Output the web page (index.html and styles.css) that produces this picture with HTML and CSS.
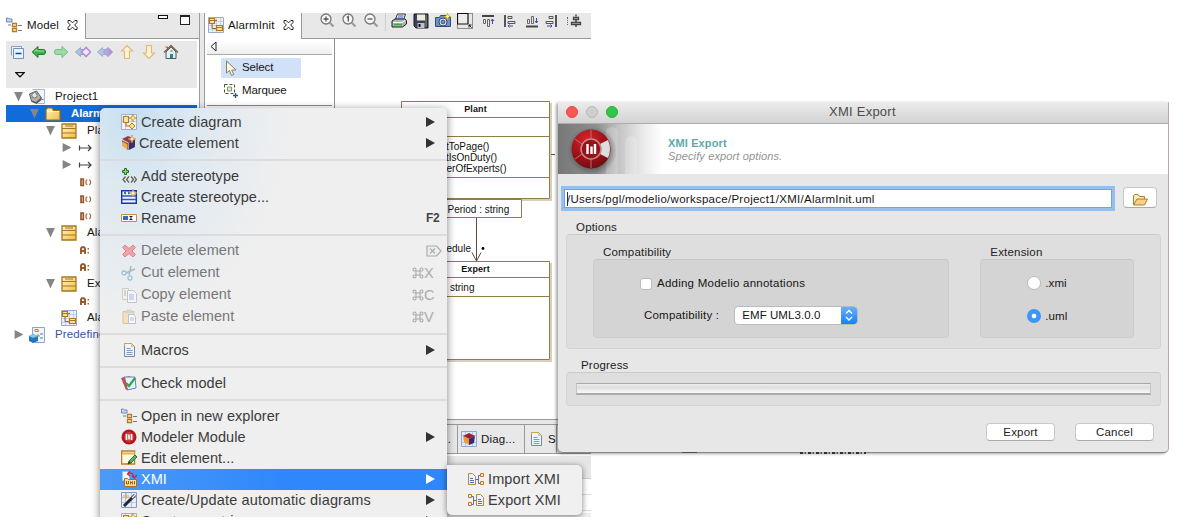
FILE: index.html
```html
<!DOCTYPE html>
<html lang="en">
<head>
<meta charset="utf-8">
<title>Modelio - XMI Export</title>
<link rel="stylesheet" href="styles.css">
</head>
<body>
<svg class="sprite" aria-hidden="true">
  <defs>
    <linearGradient id="gold" x1="0" y1="0" x2="1" y2="1"><stop offset="0" stop-color="#fff6cf"/><stop offset="1" stop-color="#f0bd3e"/></linearGradient>
    <linearGradient id="violet" x1="0" y1="0" x2="1" y2="0"><stop offset="0" stop-color="#aebfe4"/><stop offset="1" stop-color="#b28ad2"/></linearGradient>
    <radialGradient id="redball" cx=".4" cy=".25" r=".8"><stop offset="0" stop-color="#d3232c"/><stop offset=".55" stop-color="#a11319"/><stop offset="1" stop-color="#6b0d10"/></radialGradient>
  </defs>
  <symbol id="explorer" viewBox="0 0 16 16"><path d="M.5 1h2l1 1H6v3H.5z" fill="#c8d6f3" stroke="#6c86be"/><path d="M2 8h3M12 8.500h4M12 13.500h4" stroke="#777"/><path d="M6.500 6.500h4v3h-4zM6.500 11.500h4v3h-4z" fill="#fff3c8" stroke="#b87a22" stroke-width="1.300"/></symbol>
  <symbol id="diagram" viewBox="0 0 16 16"><path d="M.5.500h15v15H.500z" fill="#e9effb" stroke="#9aaacd"/><path d="M4.500 1v14M8.500 1v14M12.500 1v14M1 4.500h14M1 8.500h14M1 12.500h14" stroke="#bdcbea" stroke-width=".8"/><path d="M4 7v4.500h4M6 3.500h3" stroke="#98661c" fill="none"/><path d="M1.500 1.500h5v5h-5zM8.500 8.500h6v5h-6z" fill="#ffe69a" stroke="#ad761d" stroke-width="1.200"/><path d="M1.500 3.500h5M8.500 10.500h6" stroke="#ad761d"/></symbol>
  <symbol id="close" viewBox="0 0 10 10"><path d="M.500.500h2.200L5 2.900 7.300.500h2.200v2L7.200 5l2.300 2.500v2H7.300L5 7.100 2.700 9.500H.500v-2L2.800 5 .500 2.500z" fill="#fff" stroke="#222"/></symbol>
  <symbol id="collapse" viewBox="0 0 16 16"><path d="M2.500 11.500v-9h10v2" fill="#eef5fc" stroke="#7da2c8"/><path d="M4.500 4.500h10v10h-10z" fill="#eaf4ff" stroke="#6c91bd"/><path d="M6.500 9.500h6" stroke="#174a91" stroke-width="1.500"/></symbol>
  <symbol id="left" viewBox="0 0 16 16"><path d="M1.200 8 7 2.500v3h5.500q2 0 2 2.500t-2 2.500H7v3z" fill="#42ae4c" stroke="#1e7b2b"/><path d="m3 8 3-2.500V7h7" stroke="#9ee09d" fill="none"/></symbol>
  <symbol id="right" viewBox="0 0 16 16"><path d="M14.800 8 9 2.500v3H3.500q-2 0-2 2.500t2 2.500H9v3z" fill="#9ddaa5" stroke="#75bb82"/></symbol>
  <symbol id="diamonds" viewBox="0 0 16 16"><path d="m.500 8 5-4.500v2h3v5h-3v2z" fill="#a9c2df" stroke="#8ca7ca"/><path d="m6.500 8 4.500-4.500L15.500 8 11 12.500z" fill="#f3e6fa" stroke="#b58dd4" stroke-width="1.600"/></symbol>
  <symbol id="diamonds2" viewBox="0 0 16 16"><path d="m.500 8 5-4.500v2h3v5h-3v2z" fill="#b3c6e1" stroke="#9eacd0"/><path d="m6.500 8 4.500-4.500L15.500 8 11 12.500z" fill="url(#violet)" stroke="#b08ace"/></symbol>
  <symbol id="up" viewBox="0 0 16 16"><path d="M8 1.500 13.500 7H10.500v7.500h-5V7H2.500z" fill="#fff1d5" stroke="#e1ba7b" stroke-width="1.200"/></symbol>
  <symbol id="down" viewBox="0 0 16 16"><path d="M8 14.500 13.500 9H10.500V1.500h-5V9H2.500z" fill="#fff1d5" stroke="#e1ba7b" stroke-width="1.200"/></symbol>
  <symbol id="home" viewBox="0 0 16 16"><path d="M3 8v6.500h10V8L8 3z" fill="#e5eef8" stroke="#405b75"/><path d="M2.500 3h2v4" stroke="#975b35" fill="none"/><path d="m1 8.500 7-7 7 7" stroke="#846345" stroke-width="1.500" fill="none"/><path d="M7 10h3v4H7z" fill="#338b5a"/><path d="M7.500 6h2v2h-2z" fill="#80bd59"/></symbol>
  <symbol id="project" viewBox="0 0 16 16"><path d="M3.500.500h12v14h-7" fill="#f1f5fd" stroke="#a3b6da"/><path d="m.500 5 7-3 5 7-5 5-5-2z" fill="#b4b3ae" stroke="#605e59"/><circle cx="5.500" cy="6.300" r="2.700" fill="#e5e5df" stroke="#77746d"/><path d="m2.500 11.500 4.500 1.500 5.500-5v3l-5 4-5-2z" fill="#5c5b57"/><path d="M12.500 10.500h2" stroke="#667cab"/></symbol>
  <symbol id="package" viewBox="0 0 16 16"><path d="M1 14V3.500L2.500 2H7l1.500 2.500H15V14z" fill="url(#gold)" stroke="#a06b14" stroke-width="1.200"/><path d="M2 5.500h12" stroke="#fff9df"/></symbol>
  <symbol id="class" viewBox="0 0 16 16"><path d="M1 1h14v14H1z" fill="url(#gold)" stroke="#a7771e" stroke-width="1.300"/><path d="M1 5.500h14M1 10h14" stroke="#a7771e" stroke-width="1.200"/><path d="M4 3h8" stroke="#a7771e"/></symbol>
  <symbol id="assoc" viewBox="0 0 16 16"><path d="M2.500 5.500v5M2.500 8H14M11 5l3 3-3 3" stroke="#444" fill="none" stroke-width="1.200"/></symbol>
  <symbol id="operation" viewBox="0 0 16 16"><path d="M4 5h2.300v6.500H4z" fill="none" stroke="#96572b" stroke-width="1.700"/><path d="M10.200 5.500 9 7v2.500l1.200 1.500M12.300 5.500 13.500 7v2.500L12.300 11" fill="none" stroke="#a4683d" stroke-width="1.200"/></symbol>
  <symbol id="attribute" viewBox="0 0 16 16"><path d="M4 12V6.300L5 5.300h2l1 1V12M4 9h4" fill="none" stroke="#96572b" stroke-width="1.900"/><path d="M10.500 6.800H12M10.500 10.800H12" stroke="#a4683d" stroke-width="1.500"/></symbol>
  <symbol id="predefined" viewBox="0 0 16 16"><path d="M3.500.500h12v15h-12z" fill="#f0f4fd" stroke="#8ba4d2"/><path d="M7 4h3M11 7h3M11 11h3" stroke="#5775ad"/><path d="M6 2.500h3v2H6zM8 8h2v2" fill="#fff" stroke="#c18331"/><path d="m0 9 4-2 5 2v5l-5 2-4-2z" fill="#2377be"/><path d="m0 9 4-2 5 2-5 2z" fill="#83c9f2"/></symbol>
  <symbol id="zoomin" viewBox="0 0 16 16"><circle cx="7" cy="6" r="5" fill="#f5f5f5" stroke="#777" stroke-width="1.300"/><path d="m10.500 9.500 4 4" stroke="#999" stroke-width="2.200"/><path d="M4.500 6h5M7 3.500v5" stroke="#555" stroke-width="1.300"/></symbol>
  <symbol id="zoomone" viewBox="0 0 16 16"><circle cx="7" cy="6" r="5" fill="#f5f5f5" stroke="#777" stroke-width="1.300"/><path d="m10.500 9.500 4 4" stroke="#999" stroke-width="2.200"/><path d="M5.800 4.500 7.300 3.500v5" stroke="#555" stroke-width="1.300" fill="none"/></symbol>
  <symbol id="zoomout" viewBox="0 0 16 16"><circle cx="7" cy="6" r="5" fill="#f5f5f5" stroke="#777" stroke-width="1.300"/><path d="m10.500 9.500 4 4" stroke="#999" stroke-width="2.200"/><path d="M4.500 6h5" stroke="#555" stroke-width="1.300"/></symbol>
  <symbol id="printer" viewBox="0 0 16 16"><path d="m4.500 6 2-5h8l-2 6z" fill="#edf3ff" stroke="#333"/><path d="M7 3h5.500M6.500 5h5.500" stroke="#3c58de"/><path d="m1 8 3-2h10l1.500 1.500V11l-4 3H1z" fill="#b3b3b3" stroke="#222"/><path d="M2 9.500h9l3-2" stroke="#fff" fill="none"/><path d="M3 11.500h8" stroke="#2bb637" stroke-width="1.500"/></symbol>
  <symbol id="floppy" viewBox="0 0 16 16"><path d="M1 1h14v14H3l-2-2z" fill="#39415b" stroke="#191d2d"/><path d="M4 1.500h8v6H4z" fill="#ededde"/><path d="M4.500 10h7v5h-7z" fill="#bfc3ca"/><path d="M5.500 11h2v3h-2z" fill="#111"/><path d="M13 2v12" stroke="#98945d"/></symbol>
  <symbol id="camera" viewBox="0 0 16 16"><path d="M.500 4.500h4l1-2h5l1 2h4v9h-15z" fill="#738fc3" stroke="#344b7f"/><circle cx="8" cy="9" r="4" fill="#eef3fa" stroke="#304879"/><circle cx="8" cy="9" r="2" fill="#7894c4" stroke="#39517d"/><path d="M12.500 0v7M9 3.500h7M10.500 1.500l4 4M14.500 1.500l-4 4" stroke="#e4ae21"/><path d="M12.500 2v3M11 3.500h3" stroke="#fff36f"/></symbol>
  <symbol id="area" viewBox="0 0 16 16"><path d="M.500.500h15v15H.500z" fill="none" stroke="#333" stroke-dasharray="1 1"/><path d="M.500.500h10.500v10.500H.500z" fill="#ededed" stroke="#111" stroke-width="1.200"/><path d="m12 12 2.500 2.500M12 14.500V12h2.500" stroke="#111" fill="none"/></symbol>
  <symbol id="aligntop" viewBox="0 0 16 16"><path d="M2 3h12" stroke="#444" stroke-width="2"/><path d="M3.500 6.500h2v4h-2zM7.500 6.500h2v7h-2z" fill="none" stroke="#666"/><path d="M12.500 11V6m-1.500 2 1.500-2L14 8" stroke="#4949a8" fill="none"/></symbol>
  <symbol id="alignleft" viewBox="0 0 16 16"><path d="M3 2v12" stroke="#555" stroke-width="2"/><path d="M6 3.500h4v2H6zM6 8.500h7v2H6z" fill="none" stroke="#555"/><path d="M11 13H6m1.500-1.500L6 13l1.500 1.500" stroke="#4949a8" fill="none"/></symbol>
  <symbol id="alignbottom" viewBox="0 0 16 16"><path d="M2 13.500h12" stroke="#444" stroke-width="2"/><path d="M3.500 6.500h2v4h-2zM7.500 3.500h2v7h-2z" fill="none" stroke="#666"/><path d="M12.500 5v5m-1.500-2 1.500 2L14 8" stroke="#4949a8" fill="none"/></symbol>
  <symbol id="alignright" viewBox="0 0 16 16"><path d="M13 2v12" stroke="#555" stroke-width="2"/><path d="M6 3.500h4v2H6zM3 8.500h7v2H3z" fill="none" stroke="#555"/><path d="M4 13h5m-1.500-1.500L9 13l-1.500 1.500" stroke="#4949a8" fill="none"/></symbol>
  <symbol id="aligncenter" viewBox="0 0 16 16"><path d="M8 1.500v2M8 7v2M8 12v2" stroke="#444" stroke-width="1.500"/><path d="M5.500 4.500h5v2h-5zM3.500 9.500h9v2h-9z" fill="none" stroke="#444" stroke-width="1.300"/></symbol>
  <symbol id="pointer" viewBox="0 0 16 16"><path d="M3.500 1v12l3-2.500 2 5 2.200-1-2-4.500H13z" fill="#fffbe6" stroke="#857f64"/></symbol>
  <symbol id="marquee" viewBox="0 0 16 16"><path d="M1.500 1.500h10v9h-10z" fill="none" stroke="#53503d" stroke-dasharray="3 2"/><path d="M4.500 4h4v4h-4z" fill="#e3ecd0" stroke="#88976d"/><path d="M12.500 10v5M10 12.500h5" stroke="#2a568a" stroke-width="1.300"/></symbol>
  <symbol id="newdiagram" viewBox="0 0 16 16"><path d="M.500.500h15v15H.500z" fill="#eef2fb" stroke="#a2afcd"/><path d="M4.500 1v14M10.500 1v14M1 7.500h14" stroke="#c5cfe8"/><path d="M2.500 2.500h5v6h-5zM5 9v3h4" fill="#ffe7a4" stroke="#b57c25" stroke-width="1.200"/><path d="M11 9l3 3-3 3-3-3z" fill="#ffdf79" stroke="#b57c25"/><path d="m12 0 1 3 3 1-3 1-1 3-1-3-3-1 3-1z" fill="#ffe58b" stroke="#b48229" stroke-width=".6"/></symbol>
  <symbol id="newelement" viewBox="0 0 16 16"><path d="m1 4 6-3 7 3-6 4z" fill="#943a55"/><path d="m1 5 6 3v7l-6-4z" fill="#ebad4e"/><path d="m8 8 6-4v8l-6 3z" fill="#40305f"/><path d="m1 6 6 3M7 8v7" stroke="#7e493a"/><path d="m11 0 1 3 3 1-3 1-1 3-1-3-3-1 3-1z" fill="#ffedab" stroke="#bc8b3d" stroke-width=".6"/></symbol>
  <symbol id="stereotype" viewBox="0 0 16 16"><path d="M3.500.500h2v2h2v2h-2v2h-2v-2h-2v-2h2z" fill="#8dd66f" stroke="#1f6f29"/><path d="M4.500 8.500 2 11.500l2.500 3M8 8.500l-2.500 3 2.500 3M10 8.500l2.500 3-2.500 3M13 8.500l2.500 3-2.500 3" fill="none" stroke="#5e5e49" stroke-width="1.200"/></symbol>
  <symbol id="newstereotype" viewBox="0 0 16 16"><path d="M.700 1.700h14.600v12.600H.700z" fill="#edf5ff" stroke="#1736a2" stroke-width="1.400"/><path d="M1 7h14M1 10.500h14" stroke="#2756c5" stroke-width="1.500"/><path d="m3 4 2-1M5 5 3 4M7 3l2 1-2 1" stroke="#273b89" fill="none"/><path d="m12 0 1 3 3 1-3 1-1 3-1-3-3-1 3-1z" fill="#fff4bd" stroke="#bc9136" stroke-width=".6"/></symbol>
  <symbol id="rename" viewBox="0 0 16 16"><path d="M.500 4.500h15v7H.500z" fill="#fff" stroke="#c28b50"/><path d="M2 6h5v4H2z" fill="#386bbc"/><path d="M8.500 6.500h3M10 6.500v3M8.500 9.500h3" stroke="#222"/></symbol>
  <symbol id="delete" viewBox="0 0 16 16"><path d="m4 2 4 3.500L12 2l2.500 2.500L11 8l3.500 3.500L12 14l-4-3.500L4 14l-2.500-2.500L5 8 1.500 4.500z" fill="#ef979b" stroke="#dd7379"/></symbol>
  <symbol id="cut" viewBox="0 0 16 16"><path d="m5 8 9-4M8 10l2-9" stroke="#a1b0bd" stroke-width="1.500"/><circle cx="3" cy="8" r="2" fill="#eef7fb" stroke="#8abbdc" stroke-width="1.300"/><circle cx="9" cy="13" r="2" fill="#eef7fb" stroke="#8abbdc" stroke-width="1.300"/></symbol>
  <symbol id="copy" viewBox="0 0 16 16"><path d="M1.500 1.500h6v11h-6z" fill="#f5f3e8" stroke="#cfc9ae"/><path d="M6.500 3.500h6l3 3v9h-9z" fill="#f5f8ff" stroke="#b9bdc4"/><path d="M8 8h5M8 10h5M8 12h5M3 4h2M3 6h2M3 8h2" stroke="#9daccd"/></symbol>
  <symbol id="paste" viewBox="0 0 16 16"><path d="M2 2.500h11v12H2z" fill="#f5ddba" stroke="#d8bb8b"/><path d="M4 2.500 6 .500h4l2 2V4H4z" fill="#c8d0d7"/><path d="M7.500 5.500h5l2 2v7h-7z" fill="#fff" stroke="#aabbd2"/><path d="M9 9h4M9 11h4" stroke="#9fb4d3"/></symbol>
  <symbol id="doc" viewBox="0 0 16 16"><path d="M3.500 1.500h7l3 3v10h-10z" fill="#eef4ff" stroke="#7889a3"/><path d="M3.500 4V1.500h7l3 3" stroke="#c3a652" fill="none"/><path d="M10 2v3h3z" fill="#e0bd62"/><path d="M5.500 6.500h4M5.500 8.500h6M5.500 10.500h6M5.500 12.500h6" stroke="#7f9ac8"/></symbol>
  <symbol id="check" viewBox="0 0 16 16"><path d="m0 3 9-2 4 11-8 3z" fill="#c9514e"/><path d="M3 2h11l1 11-9 2z" fill="#e5f2ff" stroke="#628ab5"/><path d="m1 3 3-1 3 13-2-1z" fill="#ad5864"/><path d="m5 8 3 3 6-8" fill="none" stroke="#3b9e4c" stroke-width="2.200"/></symbol>
  <symbol id="modelio" viewBox="0 0 16 16"><circle cx="8" cy="8" r="7.500" fill="#b4171d"/><circle cx="8" cy="8" r="4.900" fill="#c53e42"/><path d="M5.500 5v6M8 5.500v5M10.500 5v6" stroke="#fff" stroke-width="1.600"/></symbol>
  <symbol id="edit" viewBox="0 0 16 16"><path d="M.600 1h13v13H.600z" fill="#fff9df" stroke="#b1842b" stroke-width="1.300"/><path d="M1 3.500h13" stroke="#e0b553" stroke-width="2"/><path d="m7 14 1-3 6-6 2 2-6 6z" fill="#54b660" stroke="#356e38"/><path d="m7 14 1-3 2 2z" fill="#3e352a"/></symbol>
  <symbol id="xmi" viewBox="0 0 16 16"><path d="M1.500.500h7v9h-7z" fill="#f4f8ff" stroke="#9fbde5"/><path d="M3.500 7.500h3l1 1h8v7h-12z" fill="#ffe09a" stroke="#ad6e17"/><path d="M5.500 10v3h2v-3M9.500 13.500V10.500l1 1 1-1v3M13.500 10v3.500" stroke="#a45f1b" fill="none"/><path d="M7 3q5-3 6 4M9 0 6.500 3 9 5M11 5l2.500 2L16 4" stroke="#e21e2c" fill="none" stroke-width="1.300"/></symbol>
  <symbol id="wand" viewBox="0 0 16 16"><path d="M.500.500h15v15H.500z" fill="#e6edf9" stroke="#8497c1"/><path d="M4.500 1v14M10.500 1v14M1 5.500h14M1 10.500h14" stroke="#b6c5e3"/><path d="M3 14 14 3" stroke="#26262c" stroke-width="3"/><path d="m11 6 3-3" stroke="#fff" stroke-width="1.500"/><path d="M5 1v6M2 4h6" stroke="#daaf38" stroke-width="1.200"/></symbol>
  <symbol id="import" viewBox="0 0 16 16"><path d="M.500 2.500h4l3 3v8h-7z" fill="#edf3fc" stroke="#b28a38"/><path d="M2 7.500h3M2 9.500h4M2 11.500h4" stroke="#4e75b3"/><path d="M8 8.500h2.500M12 4.500h-1.500v8H12" stroke="#5a6f9e" fill="none"/><path d="M12.500 2.500h3v3h-3zM12.500 10.500h3v3h-3z" fill="#fff0c7" stroke="#cd7527"/></symbol>
  <symbol id="export" viewBox="0 0 16 16"><path d="M8.500 2.500h4l3 3v8h-7z" fill="#edf3fc" stroke="#b28a38"/><path d="M10 7.500h3M10 9.500h4M10 11.500h4" stroke="#4e75b3"/><path d="M4 4.500h1.500v8H4M5.500 8.500H8" stroke="#5a6f9e" fill="none"/><path d="M.500 2.500h3v3h-3zM.500 10.500h3v3h-3z" fill="#fff0c7" stroke="#cd7527"/></symbol>
  <symbol id="cube" viewBox="0 0 16 16"><path d="M.500.500h15v15H.500z" fill="#e1eaf9" stroke="#91a6d2"/><path d="M4.500 1v14M11.500 1v14M1 4.500h14M1 11.500h14" stroke="#b7c8e7"/><path d="m2 5 6-3 6 3-6 3z" fill="#992331"/><path d="m2 5 6 3v6l-5-3z" fill="#f19a34"/><path d="m8 8 6-3-1 7-5 2z" fill="#392a69"/></symbol>
  <symbol id="folder" viewBox="0 0 16 16"><path d="M1.500 13V3.500L3 2.500h3l1.500 2h5V7" fill="#ffeabb" stroke="#b37a31"/><path d="m1.500 13 3.500-6h10.500l-3 6z" fill="#f9cf83" stroke="#b37a31"/></symbol>
  <symbol id="command" viewBox="0 0 12 12"><path d="M4 4V2.500A1.500 1.500 0 1 0 2.500 4h7A1.500 1.500 0 1 0 8 2.500v7A1.500 1.500 0 1 0 9.500 8h-7A1.500 1.500 0 1 0 4 9.500z" fill="none" stroke="#aaa" stroke-width="1.100"/></symbol>
</svg>

<div class="desktop">
  <main class="ide">
    <section class="explorer">
      <div class="tabbar">
        <div class="tab"><svg class="icon"><use href="#explorer"/></svg><span>Model</span><svg class="closer"><use href="#close"/></svg></div>
        <div class="rest window-buttons"><i class="minimize"></i><i class="maximize"></i></div>
      </div>
      <div class="tools">
        <div class="tool-row"><svg class="icon"><use href="#collapse"/></svg><svg class="icon"><use href="#left"/></svg><svg class="icon"><use href="#right"/></svg><svg class="icon"><use href="#diamonds"/></svg><svg class="icon"><use href="#diamonds2"/></svg><svg class="icon"><use href="#up"/></svg><svg class="icon"><use href="#down"/></svg><svg class="icon"><use href="#home"/></svg></div>
        <svg class="view-menu" viewBox="0 0 10 6"><path d="M.800.700h8.400L5 4.800z" fill="#fff" stroke="#111" stroke-width="1.200"/></svg>
      </div>
      <div class="tree">
        <div class="node l0"><i class="open"></i><svg class="icon"><use href="#project"/></svg><span>Project1</span></div>
        <div class="node l1 selected"><i class="open"></i><svg class="icon"><use href="#package"/></svg><span>AlarmInit</span></div>
        <div class="node l2"><i class="open"></i><svg class="icon"><use href="#class"/></svg><span>Plant</span></div>
        <div class="node l3"><i class="shut"></i><svg class="icon"><use href="#assoc"/></svg></div>
        <div class="node l3"><i class="shut"></i><svg class="icon"><use href="#assoc"/></svg></div>
        <div class="node l3"><i></i><svg class="icon"><use href="#operation"/></svg></div>
        <div class="node l3"><i></i><svg class="icon"><use href="#operation"/></svg></div>
        <div class="node l3"><i></i><svg class="icon"><use href="#operation"/></svg></div>
        <div class="node l2"><i class="open"></i><svg class="icon"><use href="#class"/></svg><span>Alarm</span></div>
        <div class="node l3"><i></i><svg class="icon"><use href="#attribute"/></svg></div>
        <div class="node l3"><i></i><svg class="icon"><use href="#attribute"/></svg></div>
        <div class="node l2"><i class="open"></i><svg class="icon"><use href="#class"/></svg><span>Expert</span></div>
        <div class="node l3"><i></i><svg class="icon"><use href="#attribute"/></svg></div>
        <div class="node l2"><i></i><svg class="icon"><use href="#diagram"/></svg><span>AlarmInit</span></div>
        <div class="node l0 library"><i class="shut"></i><svg class="icon"><use href="#predefined"/></svg><span>Predefined</span></div>
      </div>
    </section>

    <section class="editor">
      <div class="tabbar">
        <div class="tab"><svg class="icon"><use href="#diagram"/></svg><span>AlarmInit</span><svg class="closer"><use href="#close"/></svg></div>
        <div class="rest editor-tools">
          <svg class="icon"><use href="#zoomin"/></svg><svg class="icon"><use href="#zoomone"/></svg><svg class="icon"><use href="#zoomout"/></svg><i class="divider"></i><svg class="icon"><use href="#printer"/></svg><svg class="icon"><use href="#floppy"/></svg><svg class="icon"><use href="#camera"/></svg><svg class="icon"><use href="#area"/></svg><svg class="icon"><use href="#aligntop"/></svg><svg class="icon"><use href="#alignleft"/></svg><svg class="icon"><use href="#alignbottom"/></svg><svg class="icon"><use href="#alignright"/></svg><i class="dots"></i><svg class="icon"><use href="#aligncenter"/></svg>
        </div>
      </div>
      <div class="workarea">
        <div class="palette">
          <div class="palette-head"><svg viewBox="0 0 7 11"><path d="M6 1v9L1 5.500z" fill="#fff" stroke="#222"/></svg></div>
          <div class="palette-item active"><svg class="icon"><use href="#pointer"/></svg>Select</div>
          <div class="palette-item"><svg class="icon"><use href="#marquee"/></svg>Marquee</div>
          <div class="palette-rule"></div>
        </div>
        <svg class="canvas" viewBox="335 39 220 380">
          <g fill="#d9cfbc"><path d="M403 199h149v2H403zM550 103h2v98h-2zM403 360h149v2H403zM550 263h2v99h-2z"/></g>
          <g fill="#fff" stroke="#937a4b"><path d="M401.500 101.500h148v97h-148zM401.500 117.500h148M401.500 136.500h148M401.500 177.500h148M401.500 199.500h120v18h-120zM401.500 261.500h148v98h-148zM401.500 277.500h148M401.500 296.500h148"/></g>
          <path d="M476.500 218v43M472 252.500l4.500 8.500 4.500-8.500M551 154.500h4" fill="none" stroke="#5b4c3b"/>
          <circle cx="483" cy="248.500" r="1.400"/>
          <g class="uml-title"><text x="475.500" y="112">Plant</text><text x="475.500" y="272">Expert</text></g>
          <g class="uml-text"><text x="446" y="149.500">tToPage()</text><text x="446" y="160.500">tIsOnDuty()</text><text x="446.500" y="171.500">erOfExperts()</text><text x="447.500" y="212.500">Period : string</text><text x="446.500" y="251.500">edule</text><text x="450" y="290.500">string</text></g>
        </svg>
      </div>
      <div class="view-tabs"><span class="view-tab first">.</span><span class="view-tab diag"><svg class="icon"><use href="#cube"/></svg>Diag...</span><span class="view-tab last"><svg class="icon"><use href="#doc"/></svg>S</span></div>
      <div class="properties"><div class="prop-head"></div><div class="prop-row"></div><div class="prop-row"></div><div class="prop-foot"></div></div>
    </section>

    <nav class="menu">
      <div class="item"><svg class="icon"><use href="#newdiagram"/></svg><span>Create diagram</span><b class="arrow"></b></div>
      <div class="item tight"><svg class="icon"><use href="#newelement"/></svg><span>Create element</span><b class="arrow"></b></div>
      <hr>
      <div class="item"><svg class="icon"><use href="#stereotype"/></svg><span>Add stereotype</span></div>
      <div class="item"><svg class="icon"><use href="#newstereotype"/></svg><span>Create stereotype...</span></div>
      <div class="item"><svg class="icon"><use href="#rename"/></svg><span>Rename</span><kbd class="f2">F2</kbd></div>
      <hr class="short">
      <div class="item off"><svg class="icon"><use href="#delete"/></svg><span>Delete element</span><svg class="delkey" viewBox="0 0 16 12"><path d="M1 1h9.500L15 6l-4.500 5H1zM4 3.500l5 5M9 3.500l-5 5" fill="none" stroke="#aaa" stroke-width="1.200"/></svg></div>
      <div class="item off"><svg class="icon"><use href="#cut"/></svg><span>Cut element</span><kbd><svg class="cmd"><use href="#command"/></svg>X</kbd></div>
      <div class="item off"><svg class="icon"><use href="#copy"/></svg><span>Copy element</span><kbd><svg class="cmd"><use href="#command"/></svg>C</kbd></div>
      <div class="item off"><svg class="icon"><use href="#paste"/></svg><span>Paste element</span><kbd><svg class="cmd"><use href="#command"/></svg>V</kbd></div>
      <hr>
      <div class="item"><svg class="icon"><use href="#doc"/></svg><span>Macros</span><b class="arrow"></b></div>
      <hr>
      <div class="item"><svg class="icon"><use href="#check"/></svg><span>Check model</span></div>
      <hr>
      <div class="item"><svg class="icon"><use href="#explorer"/></svg><span>Open in new explorer</span></div>
      <div class="item"><svg class="icon"><use href="#modelio"/></svg><span>Modeler Module</span><b class="arrow"></b></div>
      <div class="item"><svg class="icon"><use href="#edit"/></svg><span>Edit element...</span></div>
      <div class="item hot"><svg class="icon"><use href="#xmi"/></svg><span>XMI</span><b class="arrow"></b></div>
      <div class="item wide"><svg class="icon"><use href="#wand"/></svg><span>Create/Update automatic diagrams</span><b class="arrow"></b></div>
      <div class="item"><svg class="icon"><use href="#newdiagram"/></svg><span>Create a matrix</span><b class="arrow"></b></div>
    </nav>
    <nav class="submenu">
      <div class="item"><svg class="icon"><use href="#import"/></svg><span>Import XMI</span></div>
      <div class="item"><svg class="icon"><use href="#export"/></svg><span>Export XMI</span></div>
    </nav>
  </main>

  <section class="dialog">
    <header class="titlebar"><i class="light red"></i><i class="light"></i><i class="light green"></i><h1>XMI Export</h1></header>
    <div class="banner">
      <svg class="banner-art" viewBox="0 0 110 50">
        <defs><linearGradient id="fade"><stop offset="0" stop-color="#777"/><stop offset=".36" stop-color="#909090"/><stop offset=".56" stop-color="#c5c5c5"/><stop offset=".8" stop-color="#eee"/><stop offset=".95" stop-color="#fff"/></linearGradient><radialGradient id="halo"><stop offset=".65" stop-color="#333" stop-opacity=".55"/><stop offset="1" stop-color="#555" stop-opacity="0"/></radialGradient></defs>
        <path d="M0 0h110v50H0z" fill="url(#fade)"/>
        <path d="M48 50V8q0-5 6-5t6 5v42zM67 50V18q0-6 6-6t6 6v32z" fill="#fff" opacity=".2"/>
        <circle cx="34" cy="27" r="25" fill="url(#halo)"/>
        <circle cx="33" cy="25" r="19.500" fill="url(#redball)"/>
        <path d="m42 20 8-4q4 9 0 18l-8-4q2-5 0-10z" fill="#ddd"/>
        <path d="M33 6v9M33 35v9M17 15l7 5M17 35l7-5" stroke="#c56b6c"/>
        <circle cx="33" cy="25" r="10" fill="#941419" stroke="#ce8586" stroke-width="1.500"/>
        <path d="M29.500 20v10M33.500 22.500V30M37 20v10" stroke="#fff" stroke-width="2.400"/>
      </svg>
      <div class="banner-text"><strong>XMI Export</strong><em>Specify export options.</em></div>
    </div>
    <div class="path-row"><div class="path">/Users/pgl/modelio/workspace/Project1/XMI/AlarmInit.uml</div><button class="browse"><svg class="icon"><use href="#folder"/></svg></button></div>
    <div class="label options-label">Options</div>
    <div class="group options">
      <div class="column compat">
        <div class="label">Compatibility</div>
        <div class="group inner">
          <div class="check-row"><i class="checkbox"></i>Adding Modelio annotations</div>
          <div class="select-row"><span>Compatibility :</span><div class="select"><span>EMF UML3.0.0</span><i><svg viewBox="0 0 16 18"><path d="m5 7.500 3-3 3 3M5 11l3 3 3-3" fill="none" stroke="#fff" stroke-width="1.400"/></svg></i></div></div>
        </div>
      </div>
      <div class="column extension">
        <div class="label">Extension</div>
        <div class="group inner"><div class="radio-row"><i class="radio"></i>.xmi</div><div class="radio-row"><i class="radio on"></i>.uml</div></div>
      </div>
    </div>
    <div class="label progress-label">Progress</div>
    <div class="group progress"><div class="bar"></div></div>
    <footer><button class="push export">Export</button><button class="push cancel">Cancel</button></footer>
  </section>
  <div class="behind"><i></i><i></i></div>
</div>
</body>
</html>
```

FILE: styles.css
```css
* { box-sizing: border-box; }
body { margin: 0; background: #fff; font: 11.5px/13px "Liberation Sans", Arial, sans-serif; letter-spacing: .14px; color: #151515; }
.sprite { position: absolute; width: 0; height: 0; }
.icon { width: 16px; height: 16px; flex: none; display: block; }
.desktop { position: relative; width: 1189px; height: 532px; overflow: hidden; padding: 13px 0 0 6px; }

/* workbench */
.ide { position: relative; width: 585px; height: 504px; display: flex; gap: 4px; overflow: hidden; background: linear-gradient(#e8e8e8, #e8e8e8) 194px 0 / 4px 100% no-repeat; }
.explorer { width: 194px; flex: none; border-right: 1px solid #9d9d9d; background: #fff; }
.tabbar { display: flex; height: 26px; }
.tab { display: flex; align-items: center; flex: none; padding-bottom: 2px; background: #fff; }
.explorer .tab { width: 79px; }
.tab span { margin-left: 5px; }
.tab .closer { width: 11px; height: 10px; margin-left: 8px; }
.rest { flex: 1; background: #e8e8e8; border-left: 1px solid #999; border-bottom: 1px solid #999; }
.window-buttons { display: flex; gap: 12px; padding: 2px 9px 0 0; justify-content: flex-end; }
.minimize { width: 10px; height: 4px; border: 1px solid #111; background: #fff; }
.maximize { width: 10px; height: 10px; border: 1px solid #222; border-top-width: 2px; background: #fff; }
.tools { width: 191px; height: 47px; margin-top: 2px; padding: 3px; background: #e8e8e8; }
.tool-row { display: flex; gap: 6px; }
.view-menu { display: block; width: 10px; height: 6px; margin: 12px 0 0 6px; }
.tree { width: 191px; }
.node { display: flex; align-items: center; height: 17px; padding-left: 7px; white-space: nowrap; }
.node span { margin-left: 10px; }
.node > i { width: 11px; height: 11px; margin-right: 5px; flex: none; background: #858585; clip-path: polygon(0 0, 0 0, 0 0); }
.node > i.open { clip-path: polygon(10% 10%, 90% 10%, 50% 95%); }
.node > i.shut { clip-path: polygon(15% 10%, 95% 50%, 15% 90%); }
.l1 { padding-left: 23px; }
.l2 { padding-left: 39px; }
.l3 { padding-left: 55px; }
.selected { background: #116bd8; color: #fff; font-weight: bold; letter-spacing: -.1px; }
.library { color: #35549b; }

.editor { flex: 1; min-width: 0; display: flex; flex-direction: column; border-left: 1px solid #9d9d9d; background: #fff; }
.editor .tabbar { flex: none; }
.editor .tab { width: 96px; padding-left: 3px; }
.editor .tab span { margin-left: 4px; }
.editor-tools { display: flex; gap: 6px; padding: 0 0 0 17px; overflow: hidden; }
.divider { width: 1px; height: 18px; margin: 0 -1px 0 0; background: #cfcfcf; }
.editor-tools .icon:nth-of-type(8) { margin-left: 1px; }
.editor-tools .icon:nth-of-type(11) { margin-left: -3px; }
.dots { width: 1px; height: 8px; margin: 4px -1px 0 2px; border-left: 1px dotted #666; }
.editor-tools .icon:nth-of-type(12) { margin-left: -5px; }
.workarea { display: flex; width: 350px; height: 380px; flex: none; }
.palette { width: 130px; height: 69px; padding: 2px 2px 0 2px; border-right: 1px solid #8e8e8e; flex: none; }
.palette-head { height: 14px; border-bottom: 1px solid #aaa; background: linear-gradient(#fff, #eee); }
.palette-head svg { display: block; width: 7px; height: 11px; margin: 0 0 0 3px; }
.palette-item { display: flex; align-items: center; gap: 3px; width: 80px; height: 20px; margin: 3px 0 0 14px; padding: 0 0 1px 2px; letter-spacing: -.12px; }
.palette-item.active { background: #d0e1f8; border-radius: 1px; }
.palette-rule { height: 4px; margin-top: 4px; border-top: 1px solid #888; border-bottom: 1px solid #888; }
.canvas { width: 220px; height: 380px; display: block; flex: none; }
.canvas text { letter-spacing: 0; fill: #111; }
.uml-title text { font-size: 9px; font-weight: bold; text-anchor: middle; letter-spacing: .1px; }
.uml-text text { font-size: 10px; }
.view-tabs { display: flex; flex: none; width: 387px; height: 35px; padding-top: 5px; border-top: 1px solid #999; border-bottom: 1px solid #999; background: linear-gradient(#999, #999) 0 4px / 100% 1px no-repeat #e8e8e8; }
.view-tab { display: flex; align-items: center; border-right: 1px solid #999; gap: 4px; }
.first { width: 253px; justify-content: flex-end; padding-right: 6px; }
.diag { width: 67px; padding-left: 3px; }
.last { width: 32px; padding-left: 3px; overflow: hidden; }
.properties { margin-top: 2px; height: 62px; }
.prop-head { height: 23px; background: #e6e6e6; border-bottom: 1px solid #ccc; }
.prop-row { height: 16px; border-bottom: 1px solid #ddd; }
.prop-foot { height: 7px; background: #eee; margin-top: 2px; }

/* context menus */
.menu { position: absolute; left: 94px; top: 95px; width: 347px; height: 430px; padding-top: 4px; border-radius: 5px 5px 0 0; background: radial-gradient(ellipse at 35px 0, #c5dff1 0, rgba(218, 231, 242, .8) 60px, rgba(239, 239, 239, 0) 155px), #efefef; box-shadow: 0 2px 9px rgba(0, 0, 0, .5); font-size: 14.5px; letter-spacing: .04px; color: #3b3b3b; }
.menu hr { height: 12px; margin: 0; border: 0; background: linear-gradient(#dcdcde, #dcdcde) 0 5px / 100% 2px no-repeat; }
.menu hr.short { height: 11px; }
.item { display: flex; align-items: center; height: 21px; padding: 0 12px 1px 21px; line-height: 20px; white-space: nowrap; }
.item span { margin-left: 4px; flex: 1; padding-bottom: 1px; }
.item.tight span { margin-left: 2px; }
.item.wide { letter-spacing: .16px; }
.item.off { height: 22px; color: #777; }
.off .icon { opacity: .85; }
.arrow { width: 9px; height: 10px; background: #333; clip-path: polygon(0 0, 100% 50%, 0 100%); }
.hot { background: linear-gradient(90deg, #4c9af8, #2e87fb 55%); color: #fff; }
.hot .arrow { background: #fff; }
kbd { display: flex; align-items: center; font: inherit; color: #aaa; width: 23px; }
.cmd { width: 12px; height: 12px; }
kbd.f2 { width: 21px; margin-right: -12px; font-size: 12px; letter-spacing: -.3px; font-weight: bold; color: #444; }
.delkey { width: 16px; height: 12px; margin-right: -7px; }
.submenu { position: absolute; left: 441px; top: 452px; width: 135px; height: 50px; padding-top: 4px; border-radius: 0 5px 5px 5px; background: #f0f0f0; box-shadow: 0 1px 6px rgba(0, 0, 0, .5); font-size: 14.5px; letter-spacing: .12px; color: #3b3b3b; }

/* export dialog */
.dialog { position: absolute; left: 558px; top: 102px; width: 611px; height: 351px; background: #e7e7e7; border-right: 1px solid #b9aaa4; border-bottom: 1px solid #858585; border-radius: 2px 1px 5px 5px; box-shadow: -2px 1px 3px rgba(0, 0, 0, .35); }
.titlebar { display: flex; align-items: center; gap: 8px; height: 22px; padding: 0 0 1px 8px; border-bottom: 1px solid #acacac; background: linear-gradient(#ececec, #d3d3d3); }
.light { width: 12px; height: 12px; border: 1px solid #b9b9b9; border-radius: 50%; background: #cfcfcf; }
.light.red { background: #fc5753; border-color: #df4744; }
.light.green { background: #33c748; border-color: #27aa35; }
.titlebar h1 { margin: 0 0 0 203px; font-size: 13px; line-height: 20px; font-weight: normal; letter-spacing: .25px; color: #4c4c4c; }
.banner { display: flex; height: 50px; background: #fff; }
.banner-art { display: block; width: 110px; height: 50px; }
.banner-text { display: flex; flex-direction: column; padding-top: 13px; font-size: 11px; letter-spacing: .13px; }
.banner-text strong { color: #5fa7a9; }
.banner-text em { color: #929292; }
.path-row { display: flex; gap: 11px; padding: 15px 0 0 6px; }
.path { width: 548px; height: 19px; padding-left: 2px; line-height: 18px; border: 1px solid #70a6e0; background: linear-gradient(#333, #333) 2px 2px / 1px 14px no-repeat #fff; box-shadow: 0 0 0 3px #96bff0; letter-spacing: .27px; }
.dialog button { padding: 0; border: 1px solid #c8c8c8; border-bottom-color: #aaa; background: #fff; border-radius: 4px; font: inherit; letter-spacing: .18px; color: #222; }
.dialog .browse { width: 34px; height: 21px; margin-top: -2px; display: grid; place-items: center; padding-top: 4px; }
.label { color: #222; letter-spacing: .19px; }
.options-label { margin: 13px 0 0 18px; }
.group { border: 1px solid #d3d3d3; border-top-color: #cacaca; border-radius: 4px; background: #dedede; }
.options { display: flex; gap: 31px; width: 595px; height: 115px; margin: 0 0 0 8px; padding: 11px 26px; }
.column .label { padding-left: 10px; }
.group.inner { height: 79px; background: #d4d4d4; border-color: #cdcdcd; border-top-color: #c5c5c5; }
.compat { width: 357px; }
.extension { width: 154px; }
.check-row { display: flex; align-items: center; gap: 5px; padding: 17px 0 0 46px; letter-spacing: .24px; }
.checkbox { width: 12px; height: 12px; border: 1px solid #bbb; border-radius: 3px; background: #fff; }
.select-row { display: flex; align-items: center; justify-content: space-between; margin: 16px 90px 0 50px; letter-spacing: .2px; }
.select { display: flex; justify-content: space-between; align-items: center; width: 124px; height: 19px; padding-left: 7px; border: 1px solid #bbb; border-radius: 4px; background: #fff; letter-spacing: .06px; overflow: hidden; }
.select i { width: 16px; height: 19px; background: linear-gradient(#6bb3fa, #167bfb); }
.select svg { width: 16px; height: 18px; display: block; }
.radio-row { display: flex; align-items: center; gap: 4px; height: 14px; margin: 16px 0 19px 46px; letter-spacing: .1px; }
.radio { width: 14px; height: 14px; border: 1px solid #b9b9b9; border-radius: 50%; background: #fff; }
.radio.on { border: 0; background: radial-gradient(circle, #fff 0 2px, #3b96f8 2.7px); }
.progress-label { margin: 10px 0 0 23px; }
.progress { width: 595px; height: 34px; margin: 0 0 0 8px; padding: 10px 9px; }
.bar { height: 12px; border: 1px solid #c5c5c5; border-top-color: #a8a8a8; border-bottom: 2px solid #aaa; background: linear-gradient(#eee, #ddd 35%, #fafafa); }
footer { display: flex; gap: 20px; justify-content: flex-end; padding: 17px 14px 0 0; }
.push { height: 18px; line-height: 16px; }
.dialog .push { line-height: 16px; }
.export { width: 69px; }
.cancel { width: 79px; }
.behind { position: absolute; left: 682px; top: 452px; width: 184px; height: 2px; display: flex; justify-content: space-between; }
.behind i { width: 15px; height: 1px; background: #4e4e4e; }
.behind i + i { width: 66px; height: 2px; background: repeating-linear-gradient(90deg, #333 0 3px, #999 3px 5px, #555 5px 6px, #bbb 6px 8px); }
```
